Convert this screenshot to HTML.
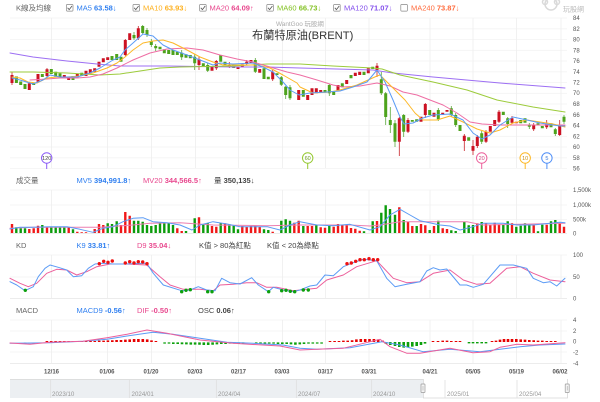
<!DOCTYPE html>
<html><head><meta charset="utf-8"><style>
html,body{margin:0;padding:0;background:#fff;width:600px;height:402px;overflow:hidden}
svg{display:block}
text{font-family:"Liberation Sans","Noto Sans CJK TC",sans-serif;font-size:7.5px;fill:#666}
.ax text{font-size:6px;fill:#555}
.d text{font-size:6px;fill:#555;text-anchor:middle;font-weight:bold}
.n text{font-size:6.2px;fill:#999}
tspan.b{font-weight:bold}
.l{fill:none;stroke-linejoin:round;stroke-linecap:round}
</style></head><body>
<svg width="600" height="402" viewBox="0 0 600 402" xmlns="http://www.w3.org/2000/svg">
<!-- grid -->
<path fill="none" stroke="#f3f3f3" stroke-width=".8" d="M10 18H567M10 28.8H567M10 39.5H567M10 50.3H567M10 61H567M10 71.8H567M10 82.5H567M10 93.3H567M10 104H567M10 114.8H567M10 125.5H567M10 136.3H567M10 147H567M10 157.8H567M10 168.5H567M10 190H567M10 205H567M10 219.5H567M10 255H567M10 277H567M10 320H567M10 331H567M10 352H567"/>
<path fill="none" stroke="#eee" stroke-width=".8" d="M51.5 18V168M107.5 18V168M151.5 18V168M195.5 18V168M238.5 18V168M282.5 18V168M325.5 18V168M369 18V168M430 18V168M473 18V168M516.5 18V168M561 18V168M51.5 190V233M107.5 190V233M151.5 190V233M195.5 190V233M238.5 190V233M282.5 190V233M325.5 190V233M369 190V233M430 190V233M473 190V233M516.5 190V233M561 190V233M51.5 255V298M107.5 255V298M151.5 255V298M195.5 255V298M238.5 255V298M282.5 255V298M325.5 255V298M369 255V298M430 255V298M473 255V298M516.5 255V298M561 255V298M51.5 320V363M107.5 320V363M151.5 320V363M195.5 320V363M238.5 320V363M282.5 320V363M325.5 320V363M369 320V363M430 320V363M473 320V363M516.5 320V363M561 320V363"/>
<path stroke="#e6e6e6" stroke-width=".8" d="M10 233.5H567M10 298.5H567M10 363.5H567"/>

<!-- header -->
<text x="16" y="10.5">K線及均線</text>
<g fill="#fff" stroke="#888" stroke-width=".7"><rect x="66.4" y="4.5" width="6.6" height="6.6" rx=".8"/><rect x="133" y="4.5" width="6.6" height="6.6" rx=".8"/><rect x="199.6" y="4.5" width="6.6" height="6.6" rx=".8"/><rect x="266.8" y="4.5" width="6.6" height="6.6" rx=".8"/><rect x="333.6" y="4.5" width="6.6" height="6.6" rx=".8"/><rect x="400.8" y="4.5" width="6.6" height="6.6" rx=".8"/></g>
<path fill="none" stroke="#555" stroke-width=".8" d="M67.6 7.8l1.6 1.8 2.8-3.6M134.2 7.8l1.6 1.8 2.8-3.6M200.8 7.8l1.6 1.8 2.8-3.6M268 7.8l1.6 1.8 2.8-3.6M334.8 7.8l1.6 1.8 2.8-3.6"/>
<text x="76.5" y="10.5" style="fill:#2f7ff0">MA5 <tspan class="b">63.58</tspan>↓</text>
<text x="143" y="10.5" style="fill:#fdb01e">MA10 <tspan class="b">63.93</tspan>↓</text>
<text x="209.5" y="10.5" style="fill:#e8488e">MA20 <tspan class="b">64.09</tspan>↑</text>
<text x="277" y="10.5" style="fill:#84c225">MA60 <tspan class="b">66.73</tspan>↓</text>
<text x="344" y="10.5" style="fill:#8450ec">MA120 <tspan class="b">71.07</tspan>↓</text>
<text x="411" y="10.5" style="fill:#ff6b3d">MA240 <tspan class="b">73.87</tspan>↓</text>
<!-- logo -->
<g fill="none" stroke="#d9d9d9" stroke-width="1.5"><circle cx="551" cy="4" r="6"/><circle cx="545" cy="2" r="2.5"/><circle cx="557" cy="2" r="2.5"/></g>
<text x="563" y="11.5" style="font-size:7px;fill:#bbb">玩股網</text>
<text x="276" y="26" style="font-size:6.4px;fill:#aaa">WantGoo 玩股網</text>
<text x="252" y="39" style="font-size:11.2px;fill:#333">布蘭特原油(BRENT)</text>

<!-- candles: green wicks, red wicks -->
<path fill="none" stroke="#5aa83c" stroke-width=".8" d="M142.7 25V34M134 32V40M147 28V37M151.3 39V47M155.7 44V51M181.7 50V60M194.7 54V70M207.7 63V72M255.3 58V73M281.3 76V86M285.7 86V99M290 85V100M329.3 84V96M381.3 72V95M385.7 92V125M390.3 107V133M395 120V147M403.7 114V137M438.3 108V121M451.3 106V117M455.7 113V127M481.7 131V144M507.7 117V128M529.3 123V129M555.3 128V136M564 115V124"/>
<path fill="none" stroke="#c8252b" stroke-width=".8" d="M12 72V85M47 68V77M125.3 39V56M138.3 26V40M199 57V70M216.3 60V70M229.3 62V68M246.7 60V65M272.7 70V81M377 63V77M399.3 117V156M408 118V133M425.3 103V118M464.3 134V151M473 140V155M477.3 135V148M486 130V143M499 110V123M512 116V124M533.7 123V131M546.7 120V129M559.7 120V136"/>
<path fill="none" stroke="#4da31c" stroke-width="3" d="M16.4 76.5V83M20.7 81.5V85M25 84V89M33.7 82.5V85M42.3 74V77M51.3 69V74M55.7 71.7V76.7M60 73.3V77.3M73 76V80M81.7 72.7V76M112 56V60M116.7 54V60M121 56.7V61.7M134 35V38.3M142.7 26V33M147 30V35M151.3 41V45M155.7 46V48.3M160 46.7V49.3M164.3 49.3V53.3M168.7 50V54M173 50V55M177.3 51.7V55M181.7 52.7V57.3M186 54.3V57.7M190.3 55V58.3M194.7 56.7V63.3M203.3 63.3V66.7M207.7 65V70.7M220.7 55V61.7M225 61.7V65M233.7 65V68M255.3 60V71.7M264 68.3V79M268.3 76.7V79.3M277 73.3V75M281.3 77.3V84.7M285.7 86.7V95M290 87.3V98.3M303.3 90V96.7M325 90V92.7M329.3 85V93.3M333.7 91.7V95M342.3 83.3V87.3M351 75V78.3M364 71.7V75M372.7 66.7V69M381.3 79.3V93.3M385.7 93.3V117M390.3 120V125M395 123.3V141.7M403.7 115V131.7M412.3 120V121.7M416.7 119.3V121.7M429.7 110V115M438.3 110V119.3M451.3 108.3V115M455.7 115V125M460 125V131M468.7 137.3V140.7M481.7 133.3V141.7M503.3 111.7V115M507.7 118.3V124M520.7 120V123.3M525 118.3V122.7M529.3 125V126.7M538 123.3V125M542.3 126V128.3M551 123.3V127.3M555.3 129.3V134M564 116.7V121.7"/>
<path fill="none" stroke="#cc1122" stroke-width="3" d="M12 75V83M29.3 83.3V90M38 74V81.7M47 69.3V76M64.3 75V78.3M68.7 76.7V80M77.3 74V77.3M86 70.7V76M90.3 69.3V73.3M94.7 68.3V71.7M99 61.7V66.7M103.3 58.3V62.3M107.7 57.3V60M125.3 40V55M129.7 33.3V40M138.3 28.3V38.3M199 59.3V65M212 66.7V70.7M216.3 61V68.3M229.3 65V66.7M238 66.7V69M242.3 64.3V66.7M246.7 61.7V64M251 60V63.3M259.7 69V72.7M272.7 71.7V79.3M298.7 90V100M307.7 95V100M312 88.3V95M316.3 88.3V93.3M320.7 90V92.7M338 85V90.7M346.7 80V84M355.3 72.7V76M359.7 71.7V75M368.3 68.3V73.3M377 65.7V70M399.3 118.3V141.7M408 120V131.7M421 116.7V121.7M425.3 104V115M434 112.7V116.7M442.7 112.7V115M447 110V111.7M464.3 135.7V141M473 146V150.7M477.3 136.7V146M486 131.7V141.7M490.3 126V131.7M494.7 120V126M499 111.7V121.7M512 118.3V122.7M516.3 121.7V123.3M533.7 125V129.3M546.7 124V127.3M559.7 126V135"/>

<!-- MA lines -->
<polyline class="l" stroke="#9d6ff3" stroke-width="1" points="10,53 33,57 67,61 97,64 120,66 167,66 233,67 267,67 300,68 373,70 393,73 433,77 500,83 565,88"/>
<polyline class="l" stroke="#9ccb3b" stroke-width="1" points="10,72 33,72 67,73 100,75 120,74 140,71 160,68 180,67 233,66 267,64 300,64 333,66 373,68 382,69 400,75 433,82 467,90 497,100 533,107 565,112"/>
<polyline class="l" stroke="#ee6ea4" stroke-width="1" points="30,80 47,79 60,78 77,78 90,77 103,74 117,68 133,60 150,53 167,49 187,48 203,50 220,55 237,59 253,62 270,67 287,72 300,75 317,80 333,85 343,87 360,86 377,83 390,86 403,92 417,95 430,100 443,105 457,113 470,122 482,124 500,125 517,125 533,125 565,125"/>
<polyline class="l" stroke="#fdb827" stroke-width="1" points="12,77 20,78 28,82 37,83 47,78 57,77 67,77 80,76 93,73 107,68 117,63 125,57 133,50 143,43 153,41 163,40 173,43 187,50 200,57 213,62 223,65 240,65 257,65 270,68 283,75 297,83 300,87 313,93 330,92 340,90 357,85 377,76 380,75 390,85 405,100 415,113 423,120 437,120 450,116 463,122 477,129 490,133 500,130 513,123 527,120 540,122 553,124 565,127"/>
<polyline class="l" stroke="#5b9bf5" stroke-width="1" points="12,78 20,80 33,84 43,80 50,75 60,77 77,77 90,73 100,68 113,60 120,57 125,50 133,43 143,34 153,36 163,45 173,50 187,55 200,60 213,65 220,63 233,64 253,63 263,67 273,72 283,82 290,90 299,95 310,93 327,92 340,91 353,87 367,82 377,70 385,82 393,100 400,117 404,124 413,123 423,118 433,115 450,114 463,120 473,133 482,139 490,135 500,125 513,117 527,120 540,123 560,126 565,126"/>

<!-- flags -->
<g fill="#fff" stroke-width="1"><path stroke="#8b5cf6" d="M46.7 163V169"/><circle cx="46.7" cy="158" r="5.2" stroke="#8b5cf6"/><path stroke="#94c82e" d="M307.7 163V169"/><circle cx="307.7" cy="158" r="5.2" stroke="#94c82e"/><path stroke="#ec5f9b" d="M481.7 163V169"/><circle cx="481.7" cy="158" r="5.2" stroke="#ec5f9b"/><path stroke="#fdb827" d="M525.2 163V169"/><circle cx="525.2" cy="158" r="5.2" stroke="#fdb827"/><path stroke="#4e8ef7" d="M546.9 163V169"/><circle cx="546.9" cy="158" r="5.2" stroke="#4e8ef7"/></g>
<g style="text-anchor:middle"><text x="46.7" y="160" style="font-size:5.5px;fill:#444;text-anchor:middle">120</text><text x="307.7" y="160" style="font-size:5.5px;fill:#6a9a1c;text-anchor:middle">60</text><text x="481.7" y="160" style="font-size:5.5px;fill:#d0477f;text-anchor:middle">20</text><text x="525.2" y="160" style="font-size:5.5px;fill:#c98f10;text-anchor:middle">10</text><text x="546.9" y="160" style="font-size:5.5px;fill:#3b78d8;text-anchor:middle">5</text></g>

<!-- volume -->
<text x="16" y="183">成交量</text>
<text x="76.5" y="183" style="fill:#2f7ff0">MV5 <tspan class="b">394,991.8</tspan>↑</text>
<text x="143" y="183" style="fill:#e8488e">MV20 <tspan class="b">344,566.5</tspan>↑</text>
<text x="214" y="183" style="fill:#444">量 <tspan class="b">350,135</tspan>↓</text>
<path fill="none" stroke="#f01818" stroke-width="2.4" d="M12 233V224M29.3 233V229M33.7 233V228.3M38 233V225.7M47 233V226.7M68.7 233V227.3M77.3 233V231.7M81.7 233V232.3M86 233V232.3M94.7 233V229M99 233V224M103.3 233V225M121 233V225M125.3 233V212M129.7 233V215.7M177.3 233V228.3M181.7 233V231M199 233V217.3M212 233V226M216.3 233V226.7M225 233V223.3M242.3 233V226M246.7 233V226.7M251 233V226M255.3 233V226M259.7 233V226.7M272.7 233V231.7M294.3 233V222.7M298.7 233V220.7M307.7 233V226M312 233V226M320.7 233V227.3M325 233V227.7M333.7 233V226.7M338 233V224M342.3 233V225.3M346.7 233V225.3M351 233V228M355.3 233V228.7M359.7 233V230.7M377 233V221M399.3 233V207.3M408 233V222M412.3 233V226M421 233V224M425.3 233V225.3M434 233V226M442.7 233V228.3M447 233V229M477.3 233V223.3M486 233V223.3M490.3 233V224.7M494.7 233V222.7M499 233V224.3M512 233V223.3M533.7 233V225.3M546.7 233V224.7M559.7 233V223.3M564 233V226.7"/>
<path fill="none" stroke="#0c9c0c" stroke-width="2.4" d="M16.3 233V227.3M20.7 233V228.3M25 233V228.3M42.3 233V225M51.3 233V227.3M55.7 233V226.7M60 233V226.7M64.3 233V226.7M73 233V229.3M107.7 233V223.3M112 233V224M116.7 233V221.3M134 233V220.7M138.3 233V220.7M142.7 233V221.7M147 233V225M151.3 233V226M155.7 233V225M160 233V223.3M164.3 233V223.3M168.7 233V223.3M173 233V225M186 233V231M194.7 233V218.3M203.3 233V224M207.7 233V223.3M220.7 233V223.3M229.3 233V224.3M233.7 233V225.7M238 233V229.3M264 233V229.3M268.3 233V230M281.3 233V220.7M285.7 233V219.3M290 233V220.7M303.3 233V226M316.3 233V225M329.3 233V226M364 233V231.3M372.7 233V221.3M381.3 233V212.7M385.7 233V205.3M390 233V209M395 233V214.7M403.7 233V220M416.7 233V226M429.7 233V230M438.3 233V220.7M451.3 233V230.3M455.7 233V231M464.3 233V221.7M468.7 233V225.3M473 233V225M481.7 233V222M503.3 233V225M507.7 233V221.3M516.3 233V226.7M520.7 233V225.7M525 233V223.3M529.3 233V225M538 233V231.3M542.3 233V224.7M551 233V221.3M555.3 233V220"/>
<polyline class="l" stroke="#ec7fb0" stroke-width="1" points="10,228.3 33,227.3 67,227.3 100,227.3 133,225 150,223.3 180,222.7 213,225 267,225.7 300,225 350,225 370,226 380,225 400,221.7 433,221.7 467,221.7 483,225 565,223.3"/>
<polyline class="l" stroke="#5b9bf5" stroke-width="1" points="10,229 20,227.3 33,227.3 50,226.7 67,226.7 80,229.3 93,232.3 103,228.3 113,226.7 123,221.7 133,218.3 143,217.7 153,221.7 167,222.7 180,225 192,230 200,225 213,221.7 227,224 240,226.7 267,226.7 280,230 290,225 300,221.7 317,225 333,225.7 350,224.3 370,230 380,226.7 390,215 400,209.3 410,215 420,220.7 440,225 450,226 460,230 473,226.7 483,223.3 503,223.3 517,225 533,225 560,222.3 565,222.7"/>

<!-- KD -->
<text x="16" y="248">KD</text>
<text x="76.5" y="248" style="fill:#2f7ff0">K9 <tspan class="b">33.81</tspan>↑</text>
<text x="137" y="248" style="fill:#e8488e">D9 <tspan class="b">35.04</tspan>↓</text>
<text x="199" y="248" style="fill:#444">K值 &gt; 80為紅點</text>
<text x="267" y="248" style="fill:#444">K值 &lt; 20為綠點</text>
<polyline class="l" stroke="#ec5f9b" stroke-width="1" points="10,278.3 20,283.3 28.3,286.7 36.7,283.3 46.7,273.3 56.7,269.3 66.7,270 76.7,275 86.7,271.7 96.7,266.7 110,264 126.7,264 146.7,265 160,276.7 170,285 183.3,289.3 200,289.3 213.3,290.7 220,285 233.3,284.3 246.7,282.7 256.7,282.7 266.7,287.3 276.7,287.3 293.3,290.7 300,290 316.7,288.3 326.7,280 343.3,275 356.7,266.7 376.7,260.7 393.3,278.3 406.7,282.7 420,281.7 433.3,273.3 450,270 463.3,280 476.7,284.3 490,283.3 506.7,268.3 520,266.7 533.3,273.3 550,280 565,281.7"/>
<polyline class="l" stroke="#5b9bf5" stroke-width="1" points="10,281.7 16.7,285 25,290.7 33.3,286.7 38.3,276.7 45,268.3 50,265 58.3,267.3 66.7,270 73.3,276.7 81.7,275.7 88.3,268.3 95,264 103.3,263.3 113.3,264 123.3,264 146.7,263.3 153.3,273.3 163.3,285 181.7,290.7 190,290 198.3,286.7 206.7,290 215,290.7 221.7,278.3 230,282.7 240,284 251.7,277.7 258.3,285 268.3,291.7 273.3,287.3 283.3,290 293.3,291.7 300,290 310,286 316.7,285 325,275 333.3,275.7 343.3,266.7 353.3,262.7 363.3,259.3 376.7,260.7 386.7,278.3 395,286.7 406.7,284.3 420,281.7 426.7,271 433.3,267.7 440,270 446.7,269 460,285 466.7,285 473.3,287.3 483.3,284.3 500,265 513.3,265 526.7,268.3 533.3,278.3 543.3,282.7 550,281.7 556.7,286 565,278.3"/>
<g fill="#ee1111"><circle cx="99.3" cy="263.7" r="1.7"/><circle cx="103.7" cy="261.3" r="1.7"/><circle cx="108" cy="262.3" r="1.7"/><circle cx="112.3" cy="261" r="1.7"/><circle cx="125.3" cy="263" r="1.7"/><circle cx="129.7" cy="261.7" r="1.7"/><circle cx="134" cy="263" r="1.7"/><circle cx="138.3" cy="261.7" r="1.7"/><circle cx="142.7" cy="262" r="1.7"/><circle cx="147" cy="263.7" r="1.7"/><circle cx="347" cy="263.7" r="1.7"/><circle cx="351.3" cy="263" r="1.7"/><circle cx="355.7" cy="261.3" r="1.7"/><circle cx="360" cy="259.7" r="1.7"/><circle cx="364.3" cy="259.7" r="1.7"/><circle cx="369" cy="258.7" r="1.7"/><circle cx="373.3" cy="259.7" r="1.7"/><circle cx="377.7" cy="259.7" r="1.7"/></g>
<g fill="#0ca00c"><circle cx="25.3" cy="290.3" r="1.7"/><circle cx="181.7" cy="291.7" r="1.7"/><circle cx="186" cy="290.3" r="1.7"/><circle cx="190.3" cy="289.7" r="1.7"/><circle cx="207.7" cy="291.7" r="1.7"/><circle cx="212" cy="291.7" r="1.7"/><circle cx="268.7" cy="291.7" r="1.7"/><circle cx="281.7" cy="290.7" r="1.7"/><circle cx="286" cy="290.3" r="1.7"/><circle cx="290.3" cy="291.3" r="1.7"/><circle cx="294.7" cy="291.7" r="1.7"/><circle cx="303.3" cy="290" r="1.7"/><circle cx="308.3" cy="290" r="1.7"/></g>

<!-- MACD -->
<text x="16" y="313">MACD</text>
<text x="76.5" y="313" style="fill:#2f7ff0">MACD9 <tspan class="b">-0.56</tspan>↑</text>
<text x="137" y="313" style="fill:#e8488e">DIF <tspan class="b">-0.50</tspan>↑</text>
<text x="198" y="313" style="fill:#444">OSC <tspan class="b">0.06</tspan>↑</text>
<path fill="none" stroke="#e60000" stroke-width="2.6" d="M46.9 342V341M51.2 342V341M55.6 342V341M60 342V341M64.3 342V341M68.7 342V341M73 342V341M77.4 342V341M81.8 342V341M86.1 342V341M90.5 342V341M94.8 342V341M99.2 342V340.6M103.6 342V340.6M107.9 342V340.4M112.3 342V340.2M116.6 342V340M121 342V340M125.4 342V339.6M129.7 342V339.4M134.1 342V339M138.4 342V339M142.8 342V339M147.2 342V339.4M151.5 342V340.4M155.9 342V341M330 342V341M334.6 342V341M339 342V341M343.4 342V340.6M347.7 342V340.6M352.1 342V340.2M356.4 342V339.4M360.8 342V339M365.2 342V339M369.5 342V339M373.9 342V339M378.2 342V339.4M382.6 342V340.6M433 342V341M438 342V341M442.7 342V340.6M447 342V340.6M451.3 342V341M456 342V341M460 342V341M492 342V341M496 342V340.6M500 342V339.6M504 342V339M508 342V339M512 342V339M516.3 342V339M520.7 342V339.4M525 342V339.6M529.3 342V340M533.7 342V340.2M538 342V340.6M542.3 342V340.6M546.7 342V341M551 342V341M555.3 342V341"/>
<path fill="none" stroke="#0ca00c" stroke-width="2.6" d="M25.1 342.6V343.6M29.4 342.6V343.6M33.8 342.6V343.6M164.6 342.4V343.6M169 342.4V343.6M173.3 342.4V344M177.7 342.4V344M182 342.4V344.2M186.4 342.4V344.4M190.8 342.4V344.6M195.1 342.4V344.6M199.5 342.4V344.8M203.8 342.4V345M208.2 342.4V345M212.6 342.4V344.8M216.9 342.4V344.4M221.3 342.4V344M225.6 342.4V344M230 342.4V343.6M234.4 342.4V343.6M238.7 342.4V343.6M243.1 342.4V343.6M256.2 342.4V343.6M260.5 342.4V343.6M264.9 342.4V343.6M269.2 342.4V343.6M273.6 342.4V343.6M278 342.4V344M282.3 342.4V344M286.7 342.4V344M291 342.4V344.4M295.4 342.4V344.8M299.8 342.4V344.4M304 342.4V344M308.5 342.4V343.6M312.8 342.4V343.6M317.2 342.4V343.6M321.6 342.4V343.6M386 342V344M390.3 342V345M395 342V346M399.3 342V347M403.7 342V347.6M408 342V347.4M412.3 342V346.6M416.7 342V346M421 342V345M425 342V343.6M469 342V343.4M473 342V343.4M477.3 342V343.4M481.7 342V343.4M486 342V343.4"/>
<polyline class="l" stroke="#5b9bf5" stroke-width="1" points="10,343.3 50,342.7 83,341.3 107,339.3 127,336 153,332.3 173,334.3 200,338.3 227,342.3 253,343.3 283,345 300,348.3 317,349.3 350,347.7 382,341.7 400,345 423,351.7 450,349.3 480,351.7 500,349.3 520,346.7 540,345 565,344"/>
<polyline class="l" stroke="#ec5f9b" stroke-width="1" points="10,343 30,344.3 50,342.3 83,341.3 107,337.7 127,334.3 147,330 167,333.3 200,340 233,343.3 280,346 300,350 317,349.3 343,348.3 380,339.3 390,346.7 407,353.3 420,353.3 450,348.3 473,352.7 490,351.7 500,347.3 517,344.3 533,345 565,342.7"/>

<!-- axis -->
<g class="ax">
<text x="573" y="20">84</text><text x="573" y="31">82</text><text x="573" y="41.5">80</text><text x="573" y="52.5">78</text><text x="573" y="63">76</text><text x="573" y="74">74</text><text x="573" y="84.5">72</text><text x="573" y="95">70</text><text x="573" y="106">68</text><text x="573" y="117">66</text><text x="573" y="127.5">64</text><text x="573" y="138.5">62</text><text x="573" y="149">60</text><text x="573" y="160">58</text><text x="573" y="170.5">56</text>
<text x="573" y="192">1,500k</text><text x="573" y="207">1,000k</text><text x="573" y="221.5">500k</text><text x="573" y="235.5">0</text>
<text x="573" y="257">100</text><text x="573" y="279">50</text><text x="573" y="300.5">0</text>
<text x="573" y="322">4</text><text x="573" y="333">2</text><text x="573" y="343.5">0</text><text x="573" y="354.5">-2</text><text x="573" y="365.5">-4</text>
</g>
<g class="d"><text x="51.5" y="373.5">12/16</text><text x="107" y="373.5">01/06</text><text x="151" y="373.5">01/20</text><text x="195" y="373.5">02/03</text><text x="238.5" y="373.5">02/17</text><text x="282" y="373.5">03/03</text><text x="325.5" y="373.5">03/17</text><text x="369" y="373.5">03/31</text><text x="430" y="373.5">04/21</text><text x="473" y="373.5">05/05</text><text x="516.5" y="373.5">05/19</text><text x="560" y="373.5">06/02</text></g>

<!-- navigator -->
<rect x="10" y="379" width="413" height="19" fill="#eceff2"/>
<path fill="none" stroke="#d8d8d8" stroke-width=".8" d="M10 379.4H423.4V398H567.5V379"/>
<path fill="none" stroke="#dcdcdc" stroke-width=".7" d="M50.7 380V398M129.3 380V398M216.3 380V398M296.3 380V398M371.7 380V398M445 380V398M517 380V398"/>
<g class="n"><text x="52" y="396">2023/10</text><text x="131.5" y="396">2024/01</text><text x="218" y="396">2024/04</text><text x="298" y="396">2024/07</text><text x="373" y="396">2024/10</text><text x="447" y="396">2025/01</text><text x="519" y="396">2025/04</text></g>
<g fill="#f4f4f4" stroke="#999" stroke-width=".7"><rect x="421" y="384" width="4" height="8.5" rx=".5"/><rect x="565.2" y="384" width="4" height="8.5" rx=".5"/></g>
<path stroke="#999" stroke-width=".5" d="M423 386V390.5M567.2 386V390.5"/>
</svg>
</body></html>
